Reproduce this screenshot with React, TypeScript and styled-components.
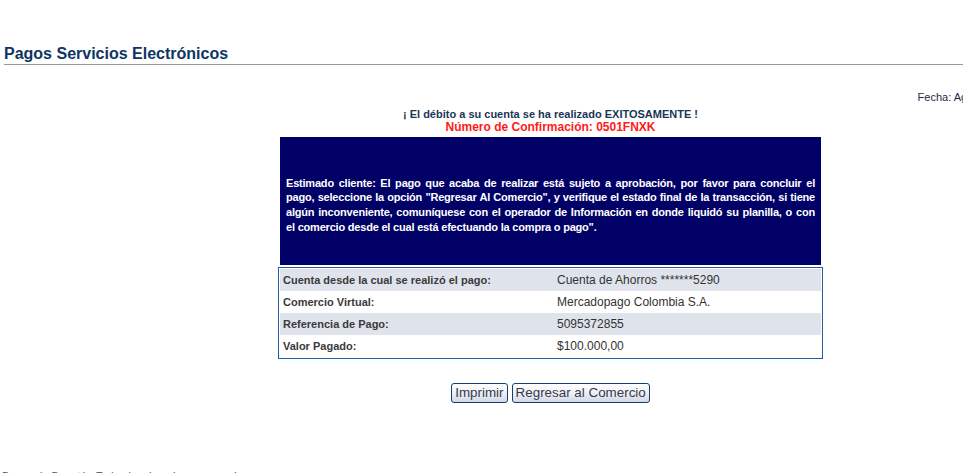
import React from 'react';
import styled, { createGlobalStyle } from 'styled-components';

const GlobalStyle = createGlobalStyle`
  html, body {
    margin: 0;
    padding: 0;
    background: #ffffff;
    overflow-x: hidden;
    font-family: Arial, "Liberation Sans", Helvetica, sans-serif;
  }
`;

const Page = styled.div`
  width: 1101px;
  padding-top: 45px;
`;

const Header = styled.div`
  width: 963px;
  padding-left: 4px;
  box-sizing: border-box;
`;

const Title = styled.h1`
  margin: 0;
  padding-bottom: 1px;
  font-size: 16px;
  line-height: 18px;
  font-weight: bold;
  color: #0e3563;
  border-bottom: 1px solid #9a9a9a;
`;

const DateRow = styled.div`
  margin-top: 26px;
  padding-right: 55px;
  text-align: right;
  font-size: 11px;
  line-height: 13px;
  color: #1c2b4a;
  white-space: nowrap;
`;

const Center = styled.div`
  display: flex;
  flex-direction: column;
  align-items: center;
  margin-top: 4px;
`;

const Success = styled.div`
  font-size: 11px;
  line-height: 13px;
  font-weight: bold;
  color: #1b3557;
`;

const Confirm = styled.div`
  font-size: 12px;
  line-height: 13px;
  font-weight: bold;
  color: #ff1a1a;
`;

const Notice = styled.div`
  margin-top: 3px;
  width: 541px;
  height: 128px;
  box-sizing: border-box;
  background: #000066;
  color: #ffffff;
  font-size: 11px;
  line-height: 14.7px;
  font-weight: bold;
  letter-spacing: -0.2px;
  padding: 8px 6px 0;
  display: flex;
  flex-direction: column;
  justify-content: center;
  overflow: hidden;
`;

const NoticeLine = styled.span<{ $last?: boolean }>`
  display: block;
  white-space: nowrap;
  text-align: ${({ $last }) => ($last ? 'left' : 'justify')};
  text-align-last: ${({ $last }) => ($last ? 'left' : 'justify')};
`;

const Details = styled.div`
  margin-top: 2px;
  width: 545px;
  box-sizing: border-box;
  border: 1px solid #1c5fa3;
  padding: 1px;
`;

const Row = styled.div<{ $shade: boolean }>`
  display: grid;
  grid-template-columns: 274px 1fr;
  height: 22px;
  align-items: center;
  background: ${({ $shade }) => ($shade ? '#dfe3ec' : '#ffffff')};
  color: #333333;
  padding-left: 3px;
`;

const Label = styled.span`
  font-size: 11px;
  font-weight: bold;
  color: #3a3a3a;
`;

const Value = styled.span`
  font-size: 12px;
`;

const Actions = styled.div`
  display: flex;
  gap: 4px;
  margin-top: 24px;
`;

const Button = styled.button`
  height: 20px;
  padding: 0 3px;
  border: 1px solid #153e70;
  border-radius: 3px;
  background: linear-gradient(#ffffff 0%, #eef0f7 50%, #d3d7e6 100%);
  font-family: Arial, "Liberation Sans", sans-serif;
  font-size: 13.4px;
  line-height: 16px;
  color: #333a4a;
  cursor: pointer;
`;

const Footer = styled.div`
  margin-top: 67px;
  padding-left: 2px;
  font-size: 11px;
  line-height: 13px;
  color: #555555;
  white-space: nowrap;
`;

const noticeLines = [
  'Estimado cliente: El pago que acaba de realizar está sujeto a aprobación, por favor para concluir el',
  'pago, seleccione la opción "Regresar Al Comercio", y verifique el estado final de la transacción, si tiene',
  'algún inconveniente, comuníquese con el operador de Información en donde liquidó su planilla, o con',
  'el comercio desde el cual está efectuando la compra o pago".',
];

const rows = [
  ['Cuenta desde la cual se realizó el pago:', 'Cuenta de Ahorros *******5290'],
  ['Comercio Virtual:', 'Mercadopago Colombia S.A.'],
  ['Referencia de Pago:', '5095372855'],
  ['Valor Pagado:', '$100.000,00'],
];

const App: React.FC = () => {
  return (
    <>
      <GlobalStyle />
      <Page>
        <Header>
          <Title>Pagos Servicios Electrónicos</Title>
        </Header>
        <DateRow>Fecha: Agosto 15 de 2024</DateRow>
        <Center>
          <Success>¡ El débito a su cuenta se ha realizado EXITOSAMENTE !</Success>
          <Confirm>Número de Confirmación: 0501FNXK</Confirm>
          <Notice>
            {noticeLines.map((line, i) => (
              <NoticeLine key={i} $last={i === noticeLines.length - 1}>
                {line}
              </NoticeLine>
            ))}
          </Notice>
          <Details>
            {rows.map(([label, value], i) => (
              <Row key={label} $shade={i % 2 === 0}>
                <Label>{label}</Label>
                <Value>{value}</Value>
              </Row>
            ))}
          </Details>
          <Actions>
            <Button>Imprimir</Button>
            <Button>Regresar al Comercio</Button>
          </Actions>
        </Center>
        <Footer>Banco de Bogotá - Todos los derechos reservados</Footer>
      </Page>
    </>
  );
};

export default App;
